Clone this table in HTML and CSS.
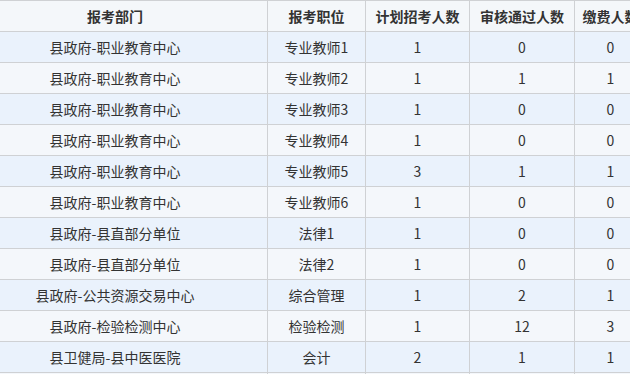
FILE: index.html
```html
<!DOCTYPE html>
<html lang="zh-CN">
<head>
<meta charset="utf-8">
<link rel="stylesheet" href="styles.css">
</head>
<body>
<div class="viewport">
<table class="grid">
<colgroup>
<col class="c1"><col class="c2"><col class="c3"><col class="c4"><col class="c5">
</colgroup>
<thead>
<tr><th>报考部门</th><th>报考职位</th><th>计划招考人数</th><th>审核通过人数</th><th>缴费人数</th></tr>
</thead>
<tbody>
<tr><td>县政府-职业教育中心</td><td>专业教师1</td><td>1</td><td>0</td><td>0</td></tr>
<tr><td>县政府-职业教育中心</td><td>专业教师2</td><td>1</td><td>1</td><td>1</td></tr>
<tr><td>县政府-职业教育中心</td><td>专业教师3</td><td>1</td><td>0</td><td>0</td></tr>
<tr><td>县政府-职业教育中心</td><td>专业教师4</td><td>1</td><td>0</td><td>0</td></tr>
<tr><td>县政府-职业教育中心</td><td>专业教师5</td><td>3</td><td>1</td><td>1</td></tr>
<tr><td>县政府-职业教育中心</td><td>专业教师6</td><td>1</td><td>0</td><td>0</td></tr>
<tr><td>县政府-县直部分单位</td><td>法律1</td><td>1</td><td>0</td><td>0</td></tr>
<tr><td>县政府-县直部分单位</td><td>法律2</td><td>1</td><td>0</td><td>0</td></tr>
<tr><td>县政府-公共资源交易中心</td><td>综合管理</td><td>1</td><td>2</td><td>1</td></tr>
<tr><td>县政府-检验检测中心</td><td>检验检测</td><td>1</td><td>12</td><td>3</td></tr>
<tr><td>县卫健局-县中医医院</td><td>会计</td><td>2</td><td>1</td><td>1</td></tr>
<tr><td>&nbsp;</td><td>&nbsp;</td><td>&nbsp;</td><td>&nbsp;</td><td>&nbsp;</td></tr>
</tbody>
</table>
</div>
</body>
</html>
```

FILE: styles.css
```css
html, body {
  margin: 0;
  padding: 0;
  background: #ffffff;
}
.viewport {
  width: 630px;
  height: 374px;
  overflow: hidden;
}
.grid {
  margin-left: -38px;
  border-collapse: collapse;
  table-layout: fixed;
  width: 684px;
  font-family: "Noto Sans CJK SC", "Noto Sans", sans-serif;
  font-size: 14px;
  color: #333333;
}
.c1 { width: 305px; }
.c2 { width: 98px; }
.c3 { width: 104px; }
.c4 { width: 105px; }
.c5 { width: 72px; }
.grid th, .grid td {
  border: 1px solid #cfd1d4;
  height: 30px;
  padding: 0;
  text-align: center;
  vertical-align: middle;
  line-height: 30px;
  white-space: nowrap;
  overflow: hidden;
}
.grid th {
  background: #f4f7fa;
  font-weight: bold;
  font-size: 14px;
}
.grid tbody tr:nth-child(odd) td {
  background: #eaf2fc;
}
.grid tbody tr:nth-child(even) td {
  background: #f4f7fb;
}
```
